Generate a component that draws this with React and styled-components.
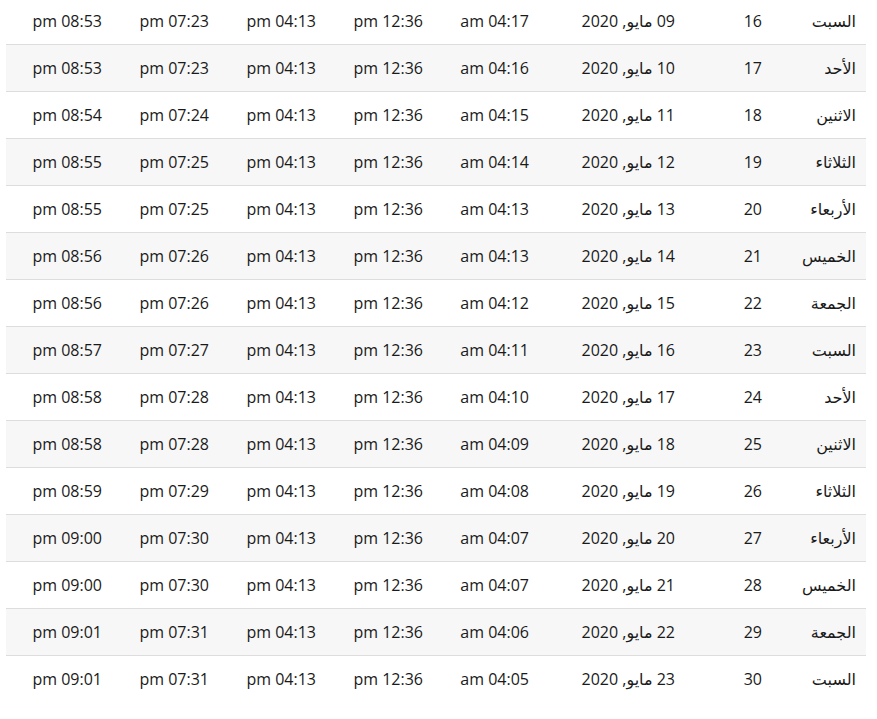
import React from "react";
import styled, { createGlobalStyle } from "styled-components";

const GlobalStyle = createGlobalStyle`
  html, body {
    margin: 0;
    padding: 0;
    background: #fff;
  }
  body {
    font-family: "Open Sans", "DejaVu Sans", sans-serif;
    color: #1a1a1a;
  }
`;

const Wrapper = styled.div`
  padding: 0 11px 0 6px;
  margin-top: -3px;
`;

const Table = styled.table`
  width: 860px;
  border-collapse: collapse;
  table-layout: fixed;
  direction: rtl;
  font-size: 16px;
`;

const Row = styled.tr`
  height: 47px;
  border-top: 1px solid #dddddd;
  background: ${(p) => (p.$striped ? "#f7f7f7" : "#ffffff")};
`;

const Cell = styled.td`
  padding: 0 10px;
  text-align: right;
  vertical-align: middle;
  white-space: nowrap;
  color: #1a1a1a;
  font-size: ${(p) => (p.$arabic ? "16px" : "16px")};
`;

const cols = [94, 87, 146, 106, 107, 107, 107, 106];

const days = [
  "السبت",
  "الأحد",
  "الاثنين",
  "الثلاثاء",
  "الأربعاء",
  "الخميس",
  "الجمعة",
];

const fajr = ["04:17", "04:16", "04:15", "04:14", "04:13", "04:13", "04:12", "04:11", "04:10", "04:09", "04:08", "04:07", "04:07", "04:06", "04:05"];
const maghrib = ["07:23", "07:23", "07:24", "07:25", "07:25", "07:26", "07:26", "07:27", "07:28", "07:28", "07:29", "07:30", "07:30", "07:31", "07:31"];
const isha = ["08:53", "08:53", "08:54", "08:55", "08:55", "08:56", "08:56", "08:57", "08:58", "08:58", "08:59", "09:00", "09:00", "09:01", "09:01"];

const rows = fajr.map((f, i) => ({
  day: days[i % 7],
  num: 16 + i,
  date: `${String(9 + i).padStart(2, "0")} مايو, 2020`,
  fajr: `${f} am`,
  dhuhr: "12:36 pm",
  asr: "04:13 pm",
  maghrib: `${maghrib[i]} pm`,
  isha: `${isha[i]} pm`,
}));

export default function App() {
  return (
    <>
      <GlobalStyle />
      <Wrapper>
        <Table>
          <colgroup>
            {cols.map((w, i) => (
              <col key={i} style={{ width: w }} />
            ))}
          </colgroup>
          <tbody>
            {rows.map((r, i) => (
              <Row key={r.num} $striped={i % 2 === 1}>
                <Cell $arabic>{r.day}</Cell>
                <Cell>{r.num}</Cell>
                <Cell>{r.date}</Cell>
                <Cell>{r.fajr}</Cell>
                <Cell>{r.dhuhr}</Cell>
                <Cell>{r.asr}</Cell>
                <Cell>{r.maghrib}</Cell>
                <Cell>{r.isha}</Cell>
              </Row>
            ))}
          </tbody>
        </Table>
      </Wrapper>
    </>
  );
}
